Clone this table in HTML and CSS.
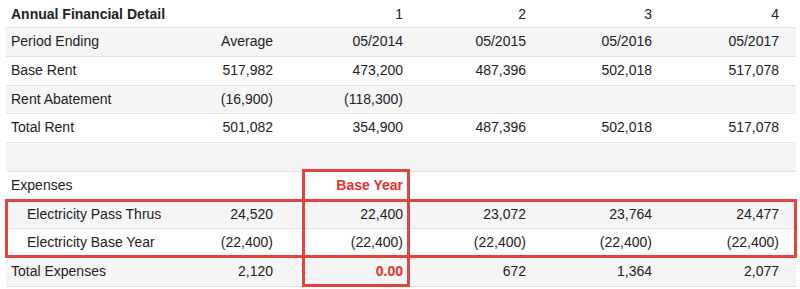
FILE: index.html
```html
<!DOCTYPE html>
<html>
<head>
<meta charset="utf-8">
<link rel="stylesheet" href="styles.css">
</head>
<body>
<div class="wrap">
  <table class="fin">
    <colgroup>
      <col class="c-label">
      <col class="c-avg">
      <col class="c-1">
      <col class="c-2">
      <col class="c-3">
      <col class="c-4">
    </colgroup>
    <tr class="head">
      <td class="label title">Annual Financial Detail</td>
      <td></td>
      <td>1</td>
      <td>2</td>
      <td>3</td>
      <td class="last">4</td>
    </tr>
    <tr class="gray">
      <td class="label">Period Ending</td>
      <td>Average</td>
      <td>05/2014</td>
      <td>05/2015</td>
      <td>05/2016</td>
      <td class="last">05/2017</td>
    </tr>
    <tr>
      <td class="label">Base Rent</td>
      <td>517,982</td>
      <td>473,200</td>
      <td>487,396</td>
      <td>502,018</td>
      <td class="last">517,078</td>
    </tr>
    <tr class="gray">
      <td class="label">Rent Abatement</td>
      <td>(16,900)</td>
      <td>(118,300)</td>
      <td></td>
      <td></td>
      <td class="last"></td>
    </tr>
    <tr>
      <td class="label">Total Rent</td>
      <td>501,082</td>
      <td>354,900</td>
      <td>487,396</td>
      <td>502,018</td>
      <td class="last">517,078</td>
    </tr>
    <tr class="gray">
      <td class="label">&nbsp;</td>
      <td></td>
      <td></td>
      <td></td>
      <td></td>
      <td class="last"></td>
    </tr>
    <tr>
      <td class="label">Expenses</td>
      <td></td>
      <td class="red">Base Year</td>
      <td></td>
      <td></td>
      <td class="last"></td>
    </tr>
    <tr class="gray">
      <td class="label sub">Electricity Pass Thrus</td>
      <td>24,520</td>
      <td>22,400</td>
      <td>23,072</td>
      <td>23,764</td>
      <td class="last">24,477</td>
    </tr>
    <tr>
      <td class="label sub">Electricity Base Year</td>
      <td>(22,400)</td>
      <td>(22,400)</td>
      <td>(22,400)</td>
      <td>(22,400)</td>
      <td class="last">(22,400)</td>
    </tr>
    <tr class="gray">
      <td class="label">Total Expenses</td>
      <td>2,120</td>
      <td class="red">0.00</td>
      <td>672</td>
      <td>1,364</td>
      <td class="last">2,077</td>
    </tr>
  </table>
  <div class="mark mark-col"></div>
  <div class="mark mark-rows"></div>
</div>
</body>
</html>
```

FILE: styles.css
```css
html, body {
  margin: 0;
  padding: 0;
  background: #ffffff;
}

.wrap {
  position: relative;
  width: 800px;
  height: 289px;
  overflow: hidden;
}

.fin {
  margin-left: 6px;
  width: 790px;
  border-collapse: collapse;
  table-layout: fixed;
  font-family: "Liberation Sans", Arial, Helvetica, sans-serif;
  font-size: 14px;
  color: #222222;
}

.c-label { width: 164px; }
.c-avg { width: 110px; }
.c-1 { width: 130px; }
.c-2 { width: 123px; }
.c-3 { width: 126px; }
.c-4 { width: 137px; }

.fin td {
  padding: 6px 7px 6px 5px;
  line-height: 15.75px;
  height: 15.75px;
  text-align: right;
  white-space: nowrap;
  border-bottom: 1px solid #e2e2e2;
}

.fin td.last {
  padding-right: 17px;
}

.fin td.label {
  text-align: left;
}

.fin td.sub {
  padding-left: 21px;
}

.fin tr.head td {
  padding-top: 5px;
  padding-bottom: 5px;
  height: 17px;
  line-height: 16px;
}

.fin td.title {
  font-weight: bold;
}

.fin tr.gray td {
  background: #f5f5f5;
}

.fin td.red {
  color: #e5302d;
  font-weight: bold;
}

.mark {
  position: absolute;
  box-sizing: border-box;
  border: 3px solid #e2433d;
}

.mark-col {
  left: 302px;
  top: 169px;
  width: 108px;
  height: 118px;
}

.mark-rows {
  left: 5px;
  top: 199px;
  width: 792px;
  height: 59px;
}
```
